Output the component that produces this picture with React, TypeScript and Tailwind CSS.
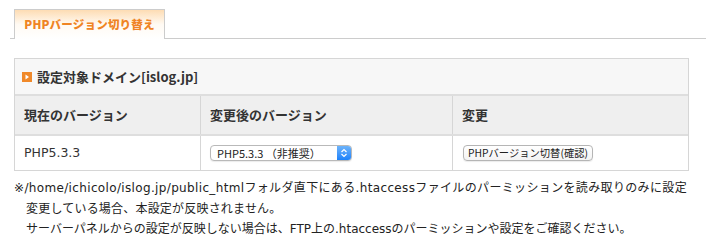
import React from "react";

const jp = { fontFamily: '"DejaVu Sans", "Noto Sans CJK JP", sans-serif' };
const hira = { fontFamily: '"Noto Sans CJK JP", "DejaVu Sans", sans-serif' };

function TitleIcon() {
  return (
    <svg width="10" height="10" viewBox="0 0 10 10" className="shrink-0">
      <rect x="0" y="0" width="10" height="10" fill="#f0892a" />
      <path d="M3.5 2.5 L7 5 L3.5 7.5 Z" fill="#ffffff" />
    </svg>
  );
}

function SelectBox() {
  return (
    <div className="flex items-stretch w-[142px] h-[16px] rounded-[4px] border border-[#b9b9b9] bg-white shadow-[0_1px_1px_rgba(0,0,0,0.08)] overflow-hidden">
      <div className="flex-1 flex items-center pl-[6px] text-[11px] text-[#222] whitespace-nowrap" style={hira}>
        PHP5.3.3 （非推奨）
      </div>
      <div className="w-[14px] bg-gradient-to-b from-[#6cb3fa] to-[#1a82fb] flex items-center justify-center">
        <svg width="8" height="10" viewBox="0 0 8 10">
          <path d="M1.5 4 L4 1.5 L6.5 4" stroke="white" strokeWidth="1.2" fill="none" />
          <path d="M1.5 6 L4 8.5 L6.5 6" stroke="white" strokeWidth="1.2" fill="none" />
        </svg>
      </div>
    </div>
  );
}

function Button() {
  return (
    <div
      className="w-[130px] h-[16px] rounded-[4px] border border-[#b5b5b5] bg-gradient-to-b from-white to-[#f3f3f3] flex items-center justify-center text-[10.3px] text-[#222] whitespace-nowrap shadow-[0_1px_1px_rgba(0,0,0,0.08)]"
      style={hira}
    >
      PHPバージョン切替(確認)
    </div>
  );
}

export default function App() {
  return (
    <div className="w-[714px] h-[251px] bg-white text-[#333] overflow-hidden" style={hira}>
      {/* Tab bar */}
      <div className="pt-[9px] pl-[10px] pr-[8px]">
        <div className="flex pl-[4px] border-b border-[#cccccc]">
          <div className="relative z-10 -mb-px w-[151px] h-[30px] border border-b-0 border-[#cccccc] bg-gradient-to-b from-[#fddcb3] via-[#fffaf3] to-white flex items-center justify-center">
            <span className="text-[11.5px] font-black text-[#ef8424] tracking-[0.2px]">PHPバージョン切り替え</span>
          </div>
        </div>
      </div>

      {/* Table */}
      <div className="mt-[19px] ml-[14px] w-[675px] border border-[#d6d6d6]">
        <div className="h-[35px] bg-[#f7f7f7] flex items-center pl-[7px] gap-[5px]">
          <TitleIcon />
          <span className="text-[13px] font-bold text-[#333]">設定対象ドメイン[islog.jp]</span>
        </div>
        <div className="grid grid-cols-[185px_252px_1fr] h-[40px] bg-[#efefef] border-t-2 border-[#dedede]">
          <div className="flex items-center pl-[9px] text-[13px] font-bold">現在のバージョン</div>
          <div className="flex items-center pl-[9px] text-[13px] font-bold border-l border-[#d6d6d6]">変更後のバージョン</div>
          <div className="flex items-center pl-[9px] text-[13px] font-bold border-l border-[#d6d6d6]">変更</div>
        </div>
        <div className="grid grid-cols-[185px_252px_1fr] h-[36px] bg-white border-t-2 border-[#dedede]">
          <div className="flex items-center pl-[9px] text-[12.5px]" style={jp}>PHP5.3.3</div>
          <div className="flex items-center pl-[9px] border-l border-[#d6d6d6]">
            <SelectBox />
          </div>
          <div className="flex items-center pl-[10px] border-l border-[#d6d6d6]">
            <Button />
          </div>
        </div>
      </div>

      {/* Notes */}
      <div className="mt-[7px] text-[12px] leading-[20.5px] text-[#222] whitespace-nowrap" style={jp}>
        <div className="pl-[14px] tracking-[0.35px]">※/home/ichicolo/islog.jp/public_htmlフォルダ直下にある.htaccessファイルのパーミッションを読み取りのみに設定</div>
        <div className="pl-[26px] tracking-[0.2px]">変更している場合、本設定が反映されません。</div>
        <div className="pl-[26px]">サーバーパネルからの設定が反映しない場合は、FTP上の.htaccessのパーミッションや設定をご確認ください。</div>
      </div>
    </div>
  );
}
